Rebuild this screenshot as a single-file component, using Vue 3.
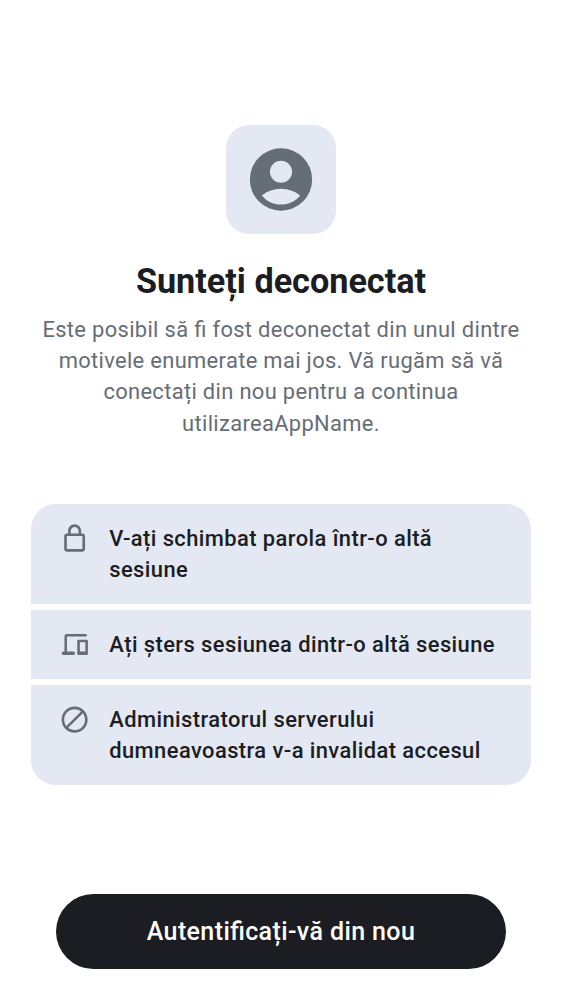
<script setup>
const reasons = [
  {
    text: ['V-ați schimbat parola într-o altă', 'sesiune'],
    icon: 'M18 8h-1V6c0-2.76-2.24-5-5-5S7 3.24 7 6v2H6c-1.1 0-2 .9-2 2v10c0 1.1.9 2 2 2h12c1.1 0 2-.9 2-2V10c0-1.1-.9-2-2-2zM9 6c0-1.66 1.34-3 3-3s3 1.34 3 3v2H9V6zm9 14H6V10h12v10z',
  },
  {
    text: ['Ați șters sesiunea dintr-o altă sesiune'],
    icon: 'M3.400 20A1.350 1.350 0 0 1 3.400 17.300H4.200V5.600Q4.200 3.900 5.900 3.900H20.500A.95.95 0 0 1 20.500 5.800H6.150V17.300H11A1.350 1.350 0 0 1 11 20zM14.900 8.200H21.300Q22.200 8.200 22.200 9.100V19.100Q22.200 20 21.300 20H14.900Q14 20 14 19.100V9.100Q14 8.200 14.900 8.200zM16 10.150V17.300H20.250V10.150z',
  },
  {
    text: ['Administratorul serverului', 'dumneavoastra v-a invalidat accesul'],
    icon: 'M12 2C6.480 2 2 6.480 2 12s4.480 10 10 10 10-4.480 10-10S17.520 2 12 2zM4 12c0-4.420 3.580-8 8-8 1.850 0 3.550.63 4.900 1.690L5.690 16.900C4.630 15.550 4 13.850 4 12zm8 8c-1.850 0-3.550-.63-4.900-1.690L18.310 7.100C19.370 8.450 20 10.150 20 12c0 4.420-3.580 8-8 8z',
  },
]
const description = ['Este posibil să fi fost deconectat din unul dintre', 'motivele enumerate mai jos. Vă rugăm să vă', 'conectați din nou pentru a continua', 'utilizareaAppName.']
</script>

<template>
  <main class="screen">
    <div class="avatar">
      <svg viewBox="0 0 24 24"><path d="M12 2a10 10 0 1 0 0 20 10 10 0 0 0 0-20zM12 5.950a3.550 3.550 0 1 1 0 7.100 3.550 3.550 0 0 1 0-7.100zM5.850 17.100C7.600 15.700 9.700 15 12 15s4.400.7 6.150 2.100C16.600 19 14.500 20 12 20s-4.600-1-6.150-2.900z" /></svg>
    </div>
    <h1>Sunteți deconectat</h1>
    <p class="description"><span v-for="line in description" :key="line">{{ line }}</span></p>
    <ul class="reasons">
      <li v-for="reason in reasons" :key="reason.icon">
        <svg viewBox="0 0 24 24"><path :d="reason.icon" /></svg>
        <div class="reason-text"><span v-for="line in reason.text" :key="line">{{ line }}</span></div>
      </li>
    </ul>
    <button type="button">Autentificați-vă din nou</button>
  </main>
</template>

<style>
body { background: #fff; }
</style>

<style scoped>
.screen {
  box-sizing: border-box;
  height: 1000px;
  padding: 125px 31px 31px;
  display: flex;
  flex-direction: column;
  align-items: center;
  font-family: Roboto, sans-serif;
  font-feature-settings: "liga" 1;
  color: #1b1d22;
  overflow: hidden;
}
.avatar {
  width: 110px;
  height: 109px;
  border-radius: 23px;
  background: #e3e8f2;
  display: grid;
  place-items: center;
}
.avatar svg { width: 74px; height: 75px; overflow: visible; }
.avatar path { transform: scale(1.01); transform-origin: 12px 12px; }
svg path { fill: #656d77; fill-rule: evenodd; }
h1 {
  margin: 25px 0 0;
  font-size: 34.200px;
  line-height: 44px;
  font-weight: 700;
  white-space: nowrap;
}
.description {
  margin: 11px 0 0;
  text-align: center;
  font-size: 21.900px;
  line-height: 31.200px;
  letter-spacing: 0.34px;
  color: #656d77;
}
span { display: block; white-space: nowrap; }
.reasons {
  width: 500px;
  margin: 65.200px 0 0;
  padding: 0;
  list-style: none;
  display: grid;
  gap: 6.250px;
  border-radius: 25px;
  overflow: hidden;
}
li {
  display: flex;
  align-items: flex-start;
  gap: 19px;
  padding: 18.750px 28px;
  background: #e3e8f2;
}
li svg { width: 31.250px; height: 31.250px; flex: none; }
.reason-text {
  font-size: 21.900px;
  line-height: 31.250px;
  letter-spacing: 0.43px;
  font-weight: 500;
}
button {
  width: 450px;
  height: 75px;
  margin-top: auto;
  border: 0;
  border-radius: 38px;
  background: #1b1d22;
  color: #fff;
  font: 500 25px/37.500px Roboto, sans-serif;
  font-feature-settings: "liga" 1;
  letter-spacing: 0.39px;
}
</style>
